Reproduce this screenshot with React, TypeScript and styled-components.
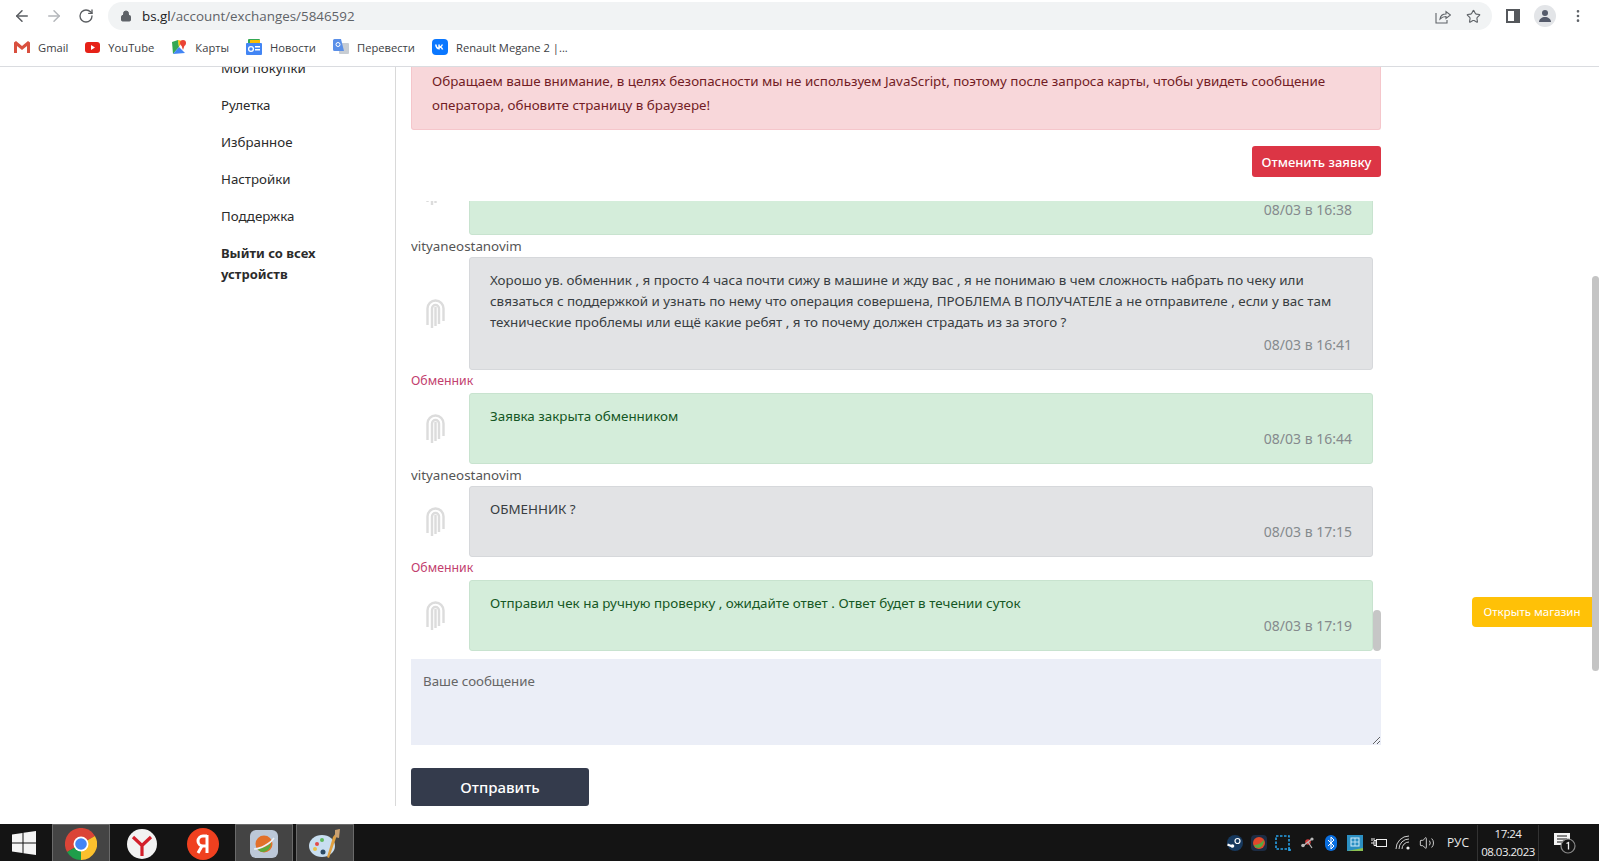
import React from 'react'
import styled, { createGlobalStyle } from 'styled-components'
import { ArrowLeft, ArrowRight, RotateCw, Lock, Star, MoreVertical, Volume2 } from 'lucide-react'

const GlobalStyle = createGlobalStyle`
  html, body { margin: 0; height: 100%; overflow: hidden; background: #fff; }
  #root { height: 100%; }
  * { box-sizing: border-box; }
`

const PAGE_FONT = `'Noto Sans', 'Open Sans', sans-serif`
const UI_FONT = `'Open Sans', 'Noto Sans', sans-serif`

const Screen = styled.div`
  position: relative;
  display: flex;
  flex-direction: column;
  height: 861px;
  overflow: hidden;
  font-family: ${PAGE_FONT};
`

/* browser chrome */
const Toolbar = styled.div`
  display: flex;
  align-items: center;
  height: 32px;
  padding-left: 13px;
  background: #fff;
  flex: none;
`
const NavIcon = styled.span<{ $faded?: boolean }>`
  display: flex;
  width: 32px;
  color: ${(p) => (p.$faded ? '#b4b7bb' : '#5a5d61')};
`
const ReloadIcon = styled(NavIcon)`
  width: 31px;
  padding-left: 1px;
`
const Omnibox = styled.div`
  display: flex;
  align-items: center;
  width: 1384px;
  height: 28px;
  padding: 0 11px 0 12px;
  background: #f1f3f4;
  border-radius: 14px;
  font: 13.4px ${UI_FONT};
  color: #5f6368;
`
const UrlHost = styled.span`
  color: #202124;
  margin-left: 10px;
`
const OmniActions = styled.div`
  display: flex;
  align-items: center;
  gap: 15px;
  margin-left: auto;
  color: #5f6368;
`
const ChromeRight = styled.div`
  display: flex;
  align-items: center;
  margin-left: 14px;
  gap: 14px;
`
const PanelIcon = styled.span`
  width: 14px;
  height: 14px;
  border: 2px solid #55585c;
  border-right-width: 6px;
`
const Profile = styled.span`
  display: flex;
  align-items: center;
  justify-content: center;
  width: 22px;
  height: 22px;
  border-radius: 50%;
  background: #e3e5e8;
`
const Bookmarks = styled.div`
  display: flex;
  align-items: center;
  height: 35px;
  padding: 0 0 4px 14px;
  gap: 17px;
  background: #fff;
  border-bottom: 1px solid #dadce0;
  flex: none;
`
const Bookmark = styled.span`
  display: flex;
  align-items: center;
  gap: 8px;
  font: 11.2px ${UI_FONT};
  color: #3c4043;
`

/* scrolled page */
const Viewport = styled.div`
  flex: 1;
  min-height: 0;
  overflow: hidden;
`
const PageBody = styled.div`
  display: flex;
  align-items: flex-start;
  width: 1381px;
  margin: -9px 0 0 206px;
`
const SideNav = styled.nav`
  width: 190px;
  flex: none;
  padding: 0 15px;
`
const NavItem = styled.div<{ $bold?: boolean }>`
  width: 120px;
  margin-bottom: ${(p) => (p.$bold ? 0 : '16px')};
  font-size: ${(p) => (p.$bold ? '13px' : '13.3px')};
  line-height: 21px;
  font-weight: ${(p) => (p.$bold ? 700 : 400)};
  color: #2b2b2b;
`
const Main = styled.main`
  width: 986px;
  padding: 0 0 0 15px;
  margin-left: -1px;
  border-left: 1px solid #d9d9d9;
`
const Alert = styled.div`
  height: 72px;
  padding: 11px 20px;
  background: #f8d7da;
  border: 1px solid #f5c6cb;
  border-top: 0;
  border-radius: 0 0 3px 3px;
  color: #721c24;
  font-size: 13.38px;
  line-height: 24px;
`
const CancelRow = styled.div`
  display: flex;
  justify-content: flex-end;
  margin: 16px 0 24px;
`
const CancelButton = styled.button`
  width: 129px;
  height: 31px;
  padding: 0;
  border: 0;
  border-radius: 3px;
  background: #dc3545;
  color: #fff;
  font: 500 13px ${PAGE_FONT};
`
const Chat = styled.div`
  position: relative;
  display: flex;
  flex-direction: column;
  justify-content: flex-end;
  height: 450px;
  overflow: hidden;
`
const ChatThumb = styled.span`
  position: absolute;
  right: 0;
  bottom: 0;
  width: 8px;
  height: 41px;
  border-radius: 4px;
  background: #c6c6c6;
`
const Author = styled.div<{ $staff?: boolean }>`
  height: ${(p) => (p.$staff ? '23px' : '22px')};
  flex: none;
  font-size: ${(p) => (p.$staff ? '12.3px' : '13.35px')};
  line-height: 22px;
  color: ${(p) => (p.$staff ? '#c2406e' : '#555')};
`
const Row = styled.div`
  display: flex;
  align-items: center;
  width: 962px;
  flex: none;
`
const Avatar = styled.div`
  display: flex;
  width: 58px;
  padding-left: 15px;
  flex: none;
`
const Bubble = styled.div<{ $staff?: boolean; $height: number }>`
  position: relative;
  width: 904px;
  height: ${(p) => p.$height}px;
  padding: 12px 20px;
  border: 1px solid ${(p) => (p.$staff ? '#c8e3cf' : '#d6d8db')};
  border-radius: 3px;
  background: ${(p) => (p.$staff ? '#d4edda' : '#e2e3e5')};
  color: ${(p) => (p.$staff ? '#155724' : '#383d41')};
  font-size: 13.4px;
  line-height: 21px;
`
const Stamp = styled.div`
  position: absolute;
  right: 20px;
  bottom: 15px;
  font-size: 14px;
  line-height: 18px;
  color: #858a8d;
`
const MessageInput = styled.textarea`
  display: block;
  width: 970px;
  height: 86px;
  margin-top: 8px;
  padding: 13px 12px;
  border: 0;
  outline: 0;
  background: #ebeef7;
  font: 13.3px ${PAGE_FONT};
  color: #555;
  &::placeholder { color: #666; opacity: 1; }
`
const SendButton = styled.button`
  display: block;
  width: 178px;
  height: 38px;
  margin-top: 23px;
  border: 0;
  border-radius: 3px;
  background: #343b4c;
  color: #fff;
  font: 500 15px ${PAGE_FONT};
`

/* floating bits */
const ShopButton = styled.div`
  position: absolute;
  left: 1472px;
  top: 597px;
  width: 120px;
  height: 30px;
  border-radius: 4px 0 0 4px;
  background: #ffc107;
  color: #fff;
  font-size: 11.5px;
  line-height: 30px;
  text-align: center;
`
const PageThumb = styled.span`
  position: absolute;
  right: 0;
  top: 276px;
  width: 7px;
  height: 395px;
  border-radius: 4px;
  background: #c4c4c4;
`

/* windows taskbar */
const Taskbar = styled.div`
  display: flex;
  align-items: center;
  height: 37px;
  background: #141414;
  flex: none;
  font-family: ${UI_FONT};
`
const StartSlot = styled.div`
  display: flex;
  justify-content: center;
  width: 52px;
  padding-right: 4px;
`
const TaskSlot = styled.div<{ $active?: boolean }>`
  display: flex;
  align-items: center;
  justify-content: center;
  width: 58px;
  height: 37px;
  margin-right: 3px;
  padding-top: 2px;
  background: ${(p) => (p.$active ? '#444' : 'transparent')};
  border: 1px solid ${(p) => (p.$active ? '#6a6a6a' : 'transparent')};
  border-bottom: 0;
`
const Tray = styled.div`
  display: flex;
  align-items: center;
  margin-left: auto;
  height: 100%;
  color: #e8e8e8;
`
const TrayIcon = styled.span`
  display: flex;
  justify-content: center;
  width: 24px;
`
const Lang = styled.span`
  width: 38px;
  font-size: 12px;
  text-align: center;
`
const Clock = styled.div`
  width: 62px;
  border-left: 1px solid #333;
  border-right: 1px solid #333;
  font-size: 11.5px;
  letter-spacing: -0.5px;
  line-height: 18px;
  text-align: center;
  color: #eee;
`
const Notify = styled.div`
  display: flex;
  width: 60px;
  padding-left: 14px;
`

const Logo = () => (
  <svg width="19" height="30" viewBox="0 0 19 30" fill="none" stroke="#dcdcdc" strokeWidth="2.4">
    <path d="M1.500 26V9.500a8 8 0 0 1 16 0V22" />
    <path d="M6 29V9.500a3.500 3.500 0 0 1 7 0V25" />
    <path d="M9.500 27V8" />
  </svg>
)

const GmailIcon = () => (
  <svg width="16" height="12" viewBox="0 0 16 12">
    <path d="M0 1.500V12h3V5l5 4 5-4v7h3V1.500L14 0 8 5 2 0z" fill="#d9503f" />
  </svg>
)
const YoutubeIcon = () => (
  <svg width="15" height="11" viewBox="0 0 15 11">
    <rect width="15" height="11" rx="3" fill="#e62117" />
    <path d="M6 3l4 2.500L6 8z" fill="#fff" />
  </svg>
)
const MapsIcon = () => (
  <svg width="16" height="16" viewBox="0 0 16 16">
    <path d="M1 3l6-2 1 7-6 7z" fill="#34a853" />
    <path d="M2 15l6-7 6 6z" fill="#4285f4" />
    <path d="M7 1l4 1-3 6z" fill="#fbbc04" />
    <circle cx="12" cy="4" r="3" fill="#ea4335" />
    <path d="M10 5l2 6 2-6z" fill="#ea4335" />
  </svg>
)
const NewsIcon = () => (
  <svg width="16" height="16" viewBox="0 0 16 16">
    <rect x="2" y="0" width="12" height="5" rx="1" fill="#34a853" />
    <rect x="4" y="1" width="10" height="5" fill="#fbbc04" />
    <rect x="0" y="4" width="16" height="12" rx="1" fill="#4285f4" />
    <rect x="9" y="7" width="5" height="1.500" fill="#fff" />
    <rect x="9" y="10" width="5" height="1.500" fill="#fff" />
    <circle cx="5" cy="10" r="2.400" fill="none" stroke="#fff" strokeWidth="1.300" />
  </svg>
)
const TranslateIcon = () => (
  <svg width="16" height="16" viewBox="0 0 16 16">
    <rect x="6" y="4" width="10" height="11" rx="1" fill="#c8cdd3" />
    <path d="M0 1.500A1.500 1.500 0 0 1 1.500 0H8l3 12H1.500A1.500 1.500 0 0 1 0 10.500z" fill="#5a8fe8" />
    <circle cx="5" cy="5.500" r="2" fill="none" stroke="#fff" strokeWidth="1" />
  </svg>
)
const VkIcon = () => (
  <svg width="16" height="16" viewBox="0 0 16 16">
    <rect width="16" height="16" rx="4" fill="#0a77ff" />
    <path d="M3 5.500h1.600c.2 1.800 1 2.900 1.700 3.100V5.500h1.500v1.800c.7-.1 1.400-.9 1.700-1.800h1.500c-.2 1.100-1 2-1.600 2.400.6.300 1.500 1.100 1.900 2.600h-1.600c-.3-.9-1-1.600-1.900-1.700v1.700h-.4C5 10.500 3.200 8.600 3 5.500z" fill="#fff" />
  </svg>
)

const ShareIcon = () => (
  <svg width="16" height="15" viewBox="0 0 16 15" fill="none" stroke="#5f6368" strokeWidth="1.100">
    <path d="M1 4v10h11V11" />
    <path d="M5 10c.5-3.500 3-5 6-5V2.500L15.500 6 11 9.500V7.500c-2.500 0-4.500 1-6 2.500z" />
  </svg>
)

const Windows = () => (
  <svg width="24" height="24" viewBox="0 0 24 24" fill="#f4f4f4">
    <path d="M0 3.500l10.500-1.500v9.500H0zM11.500 1.800L24 0v11.500H11.500zM0 12.500h10.500V22L0 20.500zM11.500 12.500H24V24l-12.500-1.800z" />
  </svg>
)
const ChromeLogo = () => (
  <svg width="32" height="32" viewBox="0 0 32 32">
    <path d="M16 16L2.100 24A16 16 0 0 1 29.900 8z" fill="#db4437" />
    <path d="M16 16L2.100 24A16 16 0 0 0 16 32z" fill="#1e9e4a" />
    <path d="M16 16L29.900 8A16 16 0 0 1 16 32z" fill="#fbc02d" />
    <circle cx="16" cy="16" r="7.500" fill="#fff" />
    <circle cx="16" cy="16" r="5.800" fill="#4285f4" />
  </svg>
)
const YandexBrowser = () => (
  <svg width="30" height="30" viewBox="0 0 30 30">
    <circle cx="15" cy="15" r="15" fill="#f2f2f2" />
    <path d="M6 8l9 8.500L24 8M15 16v11" fill="none" stroke="#d3202b" strokeWidth="3.200" />
  </svg>
)
const YandexBadge = () => (
  <svg width="32" height="32" viewBox="0 0 32 32">
    <circle cx="16" cy="16" r="16" fill="#f0401f" />
    <path d="M20 7v18M20 8h-4a5 5 0 0 0 0 10h4M15 18l-4 7" fill="none" stroke="#fff" strokeWidth="3" />
  </svg>
)
const PlanetApp = () => (
  <svg width="28" height="28" viewBox="0 0 28 28">
    <rect width="28" height="28" rx="6" fill="#bcc8d8" />
    <circle cx="14" cy="14" r="8.500" fill="#e2702a" />
    <path d="M7 18c5 1 10-1 14-5 0 5-4 9-8 9-3 0-5-2-6-4z" fill="#5cab3c" />
    <path d="M4 19C10 19 20 14 24 8" fill="none" stroke="#eef2f6" strokeWidth="1.500" />
  </svg>
)
const Palette = () => (
  <svg width="32" height="32" viewBox="0 0 32 32">
    <ellipse cx="13" cy="18" rx="13" ry="11" fill="#c8def0" />
    <circle cx="8" cy="16" r="2" fill="#e24b4b" />
    <circle cx="13" cy="12" r="2" fill="#5cb85c" />
    <circle cx="6" cy="21" r="2" fill="#e8c24a" />
    <circle cx="14" cy="24" r="2.500" fill="#2c4a63" />
    <path d="M30 1l-3 9-7 20-2-1 6-20z" fill="#e0a040" />
    <path d="M26 2l5-1-1 9-4-1z" fill="#caa070" />
  </svg>
)
const SteamIcon = () => (
  <svg width="16" height="16" viewBox="0 0 16 16">
    <circle cx="8" cy="8" r="8" fill="#17395e" />
    <circle cx="10.500" cy="6" r="2.500" fill="none" stroke="#fff" strokeWidth="1.200" />
    <path d="M0.500 9.500l5 2" stroke="#fff" strokeWidth="2" />
    <circle cx="5.500" cy="11" r="1.800" fill="#fff" />
  </svg>
)
const PlanetTray = () => (
  <svg width="16" height="16" viewBox="0 0 16 16">
    <rect width="16" height="16" rx="4" fill="#1c2c44" />
    <circle cx="8" cy="8" r="6" fill="#e0492b" />
    <path d="M3 10c4 0 7-2 10-5 0 5-3 8-6 8-2 0-3-1-4-3z" fill="#58a840" />
  </svg>
)
const SnipIcon = () => (
  <svg width="16" height="16" viewBox="0 0 16 16" fill="none">
    <rect x="1" y="1" width="13" height="13" stroke="#27a0e6" strokeWidth="1.600" strokeDasharray="2.500 1.500" />
    <path d="M13 15h3M14.500 13.500v2.500" stroke="#27a0e6" strokeWidth="1.500" />
  </svg>
)
const RedTray = () => (
  <svg width="15" height="14" viewBox="0 0 15 14">
    <circle cx="8" cy="6" r="2.800" fill="#d83c3c" />
    <circle cx="3" cy="9.500" r="1.800" fill="#b9b9b9" />
    <circle cx="12" cy="3" r="1.600" fill="#b9b9b9" />
    <path d="M8 6L3 10M8 6l4-3M8 6l4 6" stroke="#b9b9b9" strokeWidth="1.200" />
  </svg>
)
const BluetoothIcon = () => (
  <svg width="12" height="16" viewBox="0 0 12 16">
    <rect width="12" height="16" rx="6" fill="#0a6fe0" />
    <path d="M3 5l6 6-3 3V2l3 3-6 6" fill="none" stroke="#fff" strokeWidth="1" />
  </svg>
)
const NetAppIcon = () => (
  <svg width="16" height="16" viewBox="0 0 16 16">
    <rect width="16" height="16" fill="#2b8fc2" />
    <path d="M0 16h16v-3L0 16z" fill="#8cc152" />
    <rect x="4" y="3" width="8" height="8" fill="none" stroke="#d6eefc" strokeWidth="1" />
    <path d="M4 7h8M8 3v8" stroke="#d6eefc" strokeWidth=".8" />
  </svg>
)
const PowerIcon = () => (
  <svg width="16" height="14" viewBox="0 0 16 14" fill="none" stroke="#eee" strokeWidth="1">
    <rect x="5.500" y="3.500" width="10" height="7" />
    <path d="M0 7h3M3 4.500h2v5H3zM1 2v3M3 2v2" />
  </svg>
)
const WifiTilted = () => (
  <svg width="16" height="15" viewBox="0 0 16 15" fill="none" stroke="#cfcfcf" strokeWidth="1">
    <path d="M1 14A13 13 0 0 1 14 1M4 14A10 10 0 0 1 14 4M7 14a7 7 0 0 1 7-7" />
    <circle cx="13" cy="13" r="1.600" fill="#eee" stroke="none" />
  </svg>
)
const NotifyIcon = () => (
  <svg width="24" height="24" viewBox="0 0 24 24">
    <path d="M1 2h16v12h-6l-3 3v-3H1z" fill="#f4f4f4" />
    <path d="M4 5h10M4 8h10M4 11h8" stroke="#141414" strokeWidth="1.200" />
    <circle cx="15" cy="15" r="7" fill="#141414" stroke="#888" strokeWidth="1.200" />
    <path d="M13.500 12.500l2-1v7" fill="none" stroke="#eee" strokeWidth="1.300" />
  </svg>
)

const bookmarks: [React.ReactNode, string][] = [
  [<GmailIcon />, 'Gmail'],
  [<YoutubeIcon />, 'YouTube'],
  [<MapsIcon />, 'Карты'],
  [<NewsIcon />, 'Новости'],
  [<TranslateIcon />, 'Перевести'],
  [<VkIcon />, 'Renault Megane 2 |...'],
]

const trayIcons = [
  <SteamIcon />,
  <PlanetTray />,
  <SnipIcon />,
  <RedTray />,
  <BluetoothIcon />,
  <NetAppIcon />,
  <PowerIcon />,
  <WifiTilted />,
  <Volume2 size={16} strokeWidth={1.300} />,
]

const navItems = ['Мои покупки', 'Рулетка', 'Избранное', 'Настройки', 'Поддержка']

const messages = [
  { staff: true, height: 89, author: '', text: '', time: '08/03 в 16:38' },
  {
    staff: false,
    height: 113,
    author: 'vityaneostanovim',
    text: 'Хорошо ув. обменник , я просто 4 часа почти сижу в машине и жду вас , я не понимаю в чем сложность набрать по чеку или связаться с поддержкой и узнать по нему что операция совершена, ПРОБЛЕМА В ПОЛУЧАТЕЛЕ а не отправителе , если у вас там технические проблемы или ещё какие ребят , я то почему должен страдать из за этого ?',
    time: '08/03 в 16:41',
  },
  { staff: true, height: 71, author: 'Обменник', text: 'Заявка закрыта обменником', time: '08/03 в 16:44' },
  { staff: false, height: 71, author: 'vityaneostanovim', text: 'ОБМЕННИК ?', time: '08/03 в 17:15' },
  {
    staff: true,
    height: 71,
    author: 'Обменник',
    text: 'Отправил чек на ручную проверку , ожидайте ответ . Ответ будет в течении суток',
    time: '08/03 в 17:19',
  },
]

const App = () => (
  <Screen>
    <GlobalStyle />
    <Toolbar>
      <NavIcon><ArrowLeft size={18} /></NavIcon>
      <NavIcon $faded><ArrowRight size={18} /></NavIcon>
      <ReloadIcon><RotateCw size={16} /></ReloadIcon>
      <Omnibox>
        <Lock size={12} fill="#5f6368" />
        <UrlHost>bs.gl</UrlHost>/account/exchanges/5846592
        <OmniActions>
          <ShareIcon />
          <Star size={15} strokeWidth={1.800} />
        </OmniActions>
      </Omnibox>
      <ChromeRight>
        <PanelIcon />
        <Profile>
          <svg width="14" height="14" viewBox="0 0 14 14" fill="#555b6b">
            <circle cx="7" cy="4" r="3" />
            <path d="M1 13c0-3 3-5 6-5s6 2 6 5z" />
          </svg>
        </Profile>
        <MoreVertical size={16} color="#5f6368" />
      </ChromeRight>
    </Toolbar>
    <Bookmarks>
      {bookmarks.map(([icon, label]) => (
        <Bookmark key={label}>{icon}{label}</Bookmark>
      ))}
    </Bookmarks>

    <Viewport>
      <PageBody>
        <SideNav>
          {navItems.map((item) => (
            <NavItem key={item}>{item}</NavItem>
          ))}
          <NavItem $bold>Выйти со всех устройств</NavItem>
        </SideNav>
        <Main>
          <Alert>
            Обращаем ваше внимание, в целях безопасности мы не используем JavaScript, поэтому после запроса карты, чтобы увидеть сообщение оператора, обновите страницу в браузере!
          </Alert>
          <CancelRow>
            <CancelButton>Отменить заявку</CancelButton>
          </CancelRow>
          <Chat>
            {messages.map((m) => (
              <React.Fragment key={m.time}>
                {m.author && <Author $staff={m.staff}>{m.author}</Author>}
                <Row>
                  <Avatar><Logo /></Avatar>
                  <Bubble $staff={m.staff} $height={m.height}>
                    {m.text}
                    <Stamp>{m.time}</Stamp>
                  </Bubble>
                </Row>
              </React.Fragment>
            ))}
            <ChatThumb />
          </Chat>
          <MessageInput placeholder="Ваше сообщение" />
          <SendButton>Отправить</SendButton>
        </Main>
      </PageBody>
    </Viewport>

    <Taskbar>
      <StartSlot><Windows /></StartSlot>
      <TaskSlot $active><ChromeLogo /></TaskSlot>
      <TaskSlot><YandexBrowser /></TaskSlot>
      <TaskSlot><YandexBadge /></TaskSlot>
      <TaskSlot $active><PlanetApp /></TaskSlot>
      <TaskSlot $active><Palette /></TaskSlot>
      <Tray>
        {trayIcons.map((icon, i) => (
          <TrayIcon key={i}>{icon}</TrayIcon>
        ))}
        <Lang>РУС</Lang>
        <Clock>17:24<br />08.03.2023</Clock>
      </Tray>
      <Notify><NotifyIcon /></Notify>
    </Taskbar>

    <ShopButton>Открыть магазин</ShopButton>
    <PageThumb />
  </Screen>
)

export default App
